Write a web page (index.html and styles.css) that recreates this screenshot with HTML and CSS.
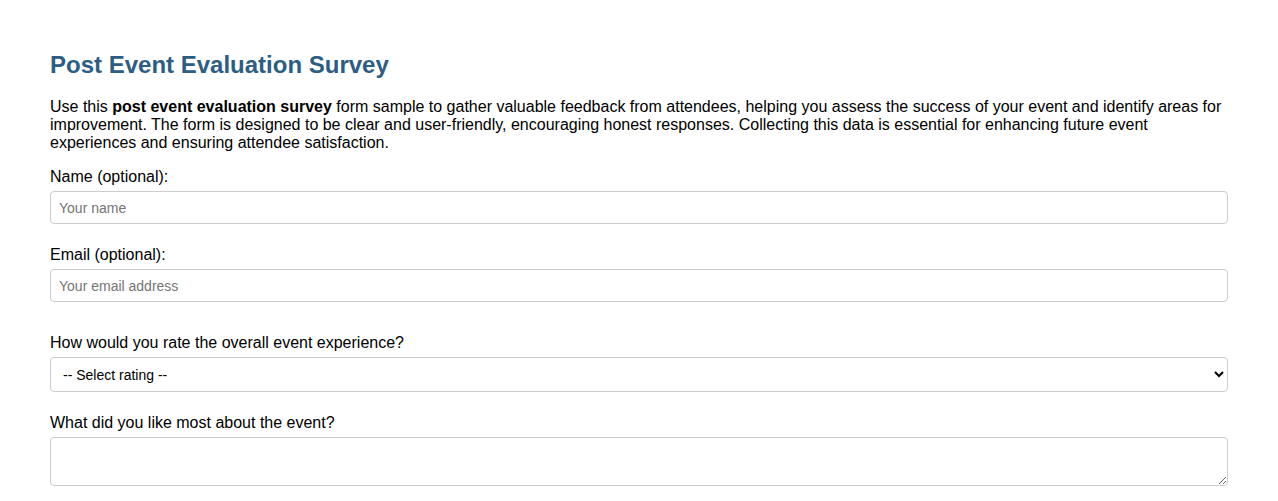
FILE: index.html
```html
<!DOCTYPE html>
<html lang="en">
<head>
<meta charset="utf-8">
<title>Post Event Evaluation Survey</title>
<link rel="stylesheet" href="styles.css">
</head>
<body>
<div class="container">
  <h2 class="title">Post Event Evaluation Survey</h2>
  <p class="intro">Use this <strong>post event evaluation survey</strong> form sample to gather valuable feedback from attendees, helping you assess the success of your event and identify areas for improvement. The form is designed to be clear and user-friendly, encouraging honest responses. Collecting this data is essential for enhancing future event experiences and ensuring attendee satisfaction.</p>
  <form class="form">
    <div class="group">
      <label class="label" for="name">Name (optional):</label>
      <input class="field" type="text" id="name" placeholder="Your name">
    </div>
    <div class="group group-last">
      <label class="label" for="email">Email (optional):</label>
      <input class="field" type="email" id="email" placeholder="Your email address">
    </div>
    <div class="group">
      <label class="label" for="rating">How would you rate the overall event experience?</label>
      <select class="field select" id="rating">
        <option>-- Select rating --</option>
        <option>Excellent</option>
        <option>Good</option>
        <option>Average</option>
        <option>Poor</option>
      </select>
    </div>
    <div class="group">
      <label class="label" for="liked">What did you like most about the event?</label>
      <textarea class="field area" id="liked" rows="2"></textarea>
    </div>
  </form>
</div>
</body>
</html>
```

FILE: styles.css
```css
html, body {
  margin: 0;
  padding: 0;
  background: #ffffff;
}
body {
  font-family: "Liberation Sans", Arial, sans-serif;
  color: #000000;
  font-size: 16px;
}
.container {
  padding: 31px 50px 20px 50px;
}
.title {
  margin: 20px 0 19px 0;
  font-size: 24px;
  font-weight: bold;
  color: #2c5e84;
  line-height: 28px;
}
.intro {
  margin: 0 0 16px 0;
  line-height: 18px;
}
.intro strong {
  font-weight: bold;
}
.form {
  display: flex;
  flex-direction: column;
}
.group {
  display: flex;
  flex-direction: column;
  margin-bottom: 22px;
}
.group-last {
  margin-bottom: 32px;
}
.label {
  display: block;
  line-height: 18px;
  margin-bottom: 5px;
}
.field {
  box-sizing: border-box;
  width: 100%;
  font-family: "Liberation Sans", Arial, sans-serif;
  font-size: 14px;
  border: 1px solid #cccccc;
  border-radius: 4px;
  padding: 7px 8px;
  height: 33px;
  color: #000000;
  background: #ffffff;
  margin: 0;
}
.field::placeholder {
  color: #757575;
}
.select {
  height: 35px;
  padding: 6px 8px;
}
.area {
  height: 49px;
  resize: vertical;
}
```
